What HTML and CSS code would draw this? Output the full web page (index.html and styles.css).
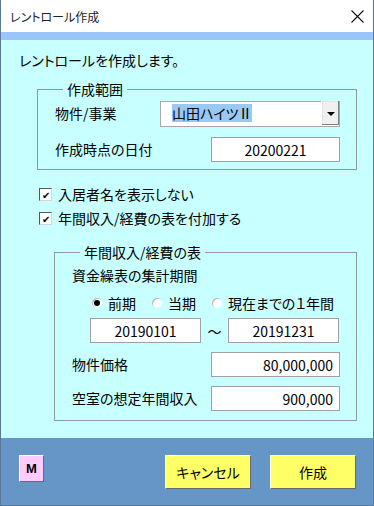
FILE: index.html
```html
<!DOCTYPE html>
<html lang="ja">
<head>
    <meta charset="UTF-8">
    <title>レントロール作成</title>
    <link rel="stylesheet" href="styles.css">
</head>
<body>
    <div class="window">
        <div class="titlebar">
            <span>レントロール作成</span>
            <svg class="close" width="13" height="13" viewBox="0 0 13 13">
                <path d="M0.5 0.5 L12.5 12.5 M12.5 0.5 L0.5 12.5" stroke="#111" stroke-width="1.1" fill="none"/>
            </svg>
        </div>
        <div class="band"></div>
        <div class="content">
            <p class="intro">レントロールを作成します。</p>

            <fieldset class="frame range">
                <legend>作成範囲</legend>
                <div class="row">
                    <span>物件/事業</span>
                    <div class="combo">
                        <span class="combo-text"><span class="selected">山田ハイツⅡ</span></span>
                        <span class="drop"><span class="tri"></span></span>
                    </div>
                </div>
                <div class="row">
                    <span>作成時点の日付</span>
                    <div class="field center">20200221</div>
                </div>
            </fieldset>

            <div class="checks">
                <label class="check"><span class="box">✔</span>入居者名を表示しない</label>
                <label class="check"><span class="box">✔</span>年間収入/経費の表を付加する</label>
            </div>

            <fieldset class="frame annual">
                <legend>年間収入/経費の表</legend>
                <div class="caption">資金繰表の集計期間</div>
                <div class="radios">
                    <label class="radio"><span class="dot on"></span>前期</label>
                    <label class="radio"><span class="dot"></span>当期</label>
                    <label class="radio"><span class="dot"></span>現在までの１年間</label>
                </div>
                <div class="period">
                    <div class="field center">20190101</div>
                    <span class="tilde">～</span>
                    <div class="field center">20191231</div>
                </div>
                <div class="row">
                    <span>物件価格</span>
                    <div class="field right">80,000,000</div>
                </div>
                <div class="row">
                    <span>空室の想定年間収入</span>
                    <div class="field right">900,000</div>
                </div>
            </fieldset>
        </div>
        <div class="footer">
            <button class="btn-m">M</button>
            <div class="actions">
                <button class="btn">キャンセル</button>
                <button class="btn">作成</button>
            </div>
        </div>
    </div>
</body>
</html>
```

FILE: styles.css
```css
body {
    margin: 0;
    font-family: "Noto Sans CJK JP", "Noto Sans", sans-serif;
    font-feature-settings: "palt";
    font-size: 13px;
    color: #000;
}

.window {
    box-sizing: border-box;
    width: 374px;
    height: 506px;
    border: 1px solid #5b7896;
    border-top: none;
    display: flex;
    flex-direction: column;
    background: #fff;
}

.titlebar {
    height: 32px;
    display: flex;
    align-items: center;
    justify-content: space-between;
    padding: 0 9px 0 9px;
    font-size: 12px;
    color: #222;
}

.band {
    height: 8px;
    background: #99c5fb;
}

.content {
    height: 398px;
    background: #c8ffff;
    padding: 0 16px 0 36px;
    box-sizing: border-box;
}

.intro {
    margin: 10px 0 0 -18px;
    line-height: 20px;
    font-size: 14px;
}

.frame {
    margin: 0;
    border: 1px solid #8c9a9c;
    padding: 0 16px 8px 17px;
    display: flex;
    flex-direction: column;
    gap: 10px;
}

.frame legend {
    margin-left: 8px;
    padding: 0 4px;
    font-size: 14px;
    line-height: 18px;
}

.range {
    margin-top: 10px;
    padding-top: 3px;
    padding-bottom: 7px;
}

.row {
    display: flex;
    justify-content: space-between;
    align-items: center;
    font-size: 14px;
    line-height: 20px;
}

.row span {
    position: relative;
    top: -1px;
}

.combo {
    width: 180px;
    height: 26px;
    box-sizing: border-box;
    background: #fff;
    border: 1px solid #a9a9a9;
    display: flex;
}

.combo-text {
    flex: 1;
    display: flex;
    align-items: center;
    padding-left: 11px;
    font-size: 14px;
}

.combo .combo-text .selected {
    top: 0;
    background: #99c9f3;
    line-height: 18px;
}

.drop {
    width: 17px;
    background: #f0f0f0;
    border-left: 1px solid #fff;
    box-shadow: inset -1px -1px 0 #808080, inset 1px 1px 0 #e3e3e3;
    display: flex;
    align-items: center;
    justify-content: center;
}

.row .drop .tri {
    top: 1px;
    width: 0;
    height: 0;
    border-left: 4px solid transparent;
    border-right: 4px solid transparent;
    border-top: 4px solid #000;
}

.field {
    width: 129px;
    height: 25px;
    box-sizing: border-box;
    background: #fff;
    border: 1px solid #a0a0a0;
    display: flex;
    align-items: center;
    font-size: 14px;
    padding: 0 6px;
}

.center {
    justify-content: center;
}

.right {
    justify-content: flex-end;
}

.checks {
    display: flex;
    flex-direction: column;
    gap: 8px;
    margin: 16px 0 0 2px;
    font-size: 14px;
}

.check {
    display: flex;
    align-items: center;
    gap: 6px;
    line-height: 16px;
}

.box {
    width: 13px;
    height: 13px;
    box-sizing: border-box;
    background: #fff;
    border: 1px solid #555;
    border-right-color: #d4d4d4;
    border-bottom-color: #d4d4d4;
    font-size: 10px;
    line-height: 11px;
    text-align: center;
    color: #000;
}

.annual {
    margin: 17px 0 0 17px;
    padding-top: 4px;
    padding-bottom: 9px;
    gap: 0;
}

.caption {
    font-size: 14px;
    line-height: 20px;
}

.radios {
    display: flex;
    gap: 16px;
    margin: 9px 0 0 20px;
    font-size: 14px;
    line-height: 18px;
}

.radio {
    display: flex;
    align-items: center;
    gap: 6px;
}

.dot {
    width: 10px;
    height: 10px;
    border-radius: 50%;
    background: #fff;
    box-shadow: inset 1px 1px 0 #b8b8b8;
    display: flex;
    align-items: center;
    justify-content: center;
}

.dot.on::after {
    content: "";
    width: 6px;
    height: 6px;
    border-radius: 50%;
    background: #000;
}

.period {
    display: flex;
    align-items: center;
    margin: 6px 0 0 18px;
}

.period .field {
    width: 111px;
}

.tilde {
    width: 27px;
    text-align: center;
    font-size: 14px;
}

.annual .row {
    margin-top: 9px;
}

.footer {
    flex: 1;
    background: #6696c8;
    display: flex;
    justify-content: space-between;
    align-items: flex-start;
    padding: 17px 17px 0 18px;
}

.btn-m {
    width: 25px;
    height: 27px;
    padding: 0;
    background: #ffccff;
    border: 1px solid;
    border-color: #fff #6a6a6a #6a6a6a #fff;
    font-family: "Liberation Sans", sans-serif;
    font-weight: bold;
    font-size: 13px;
}

.actions {
    display: flex;
    gap: 19px;
}

.btn {
    width: 86px;
    height: 34px;
    background: #ffff66;
    border: 1px solid;
    border-color: #fff #6a6a6a #6a6a6a #fff;
    font-family: inherit;
    font-feature-settings: "palt";
    font-size: 14px;
}
```
